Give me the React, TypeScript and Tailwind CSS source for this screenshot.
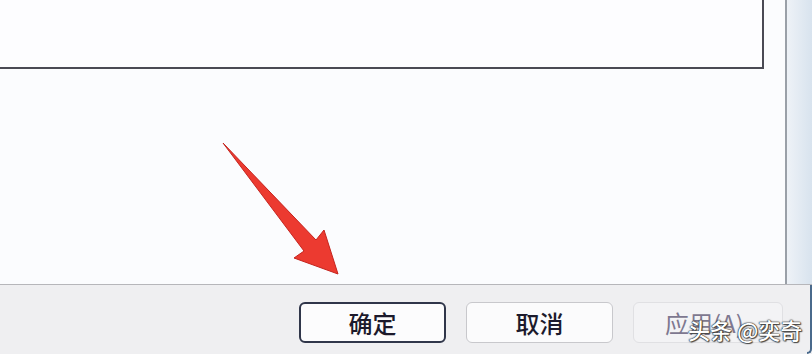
export default function App() {
	return (
		<div className="relative w-[812px] h-[354px] overflow-hidden bg-[#efeff1] font-['Noto_Sans_CJK_SC','Noto_Sans',sans-serif]">
			{/* Top content area */}
			<div className="flex h-[285px] border-b border-[#b6b6ba]">
				<div className="w-[787px] bg-[#fbfcfe] border-r-2 border-[#9aa0a8]">
					<div className="w-[764px] h-[69px] bg-[#fdfdff] border-r-2 border-b-2 border-[#4a4a54]" />
				</div>
				<div className="flex-1 bg-linear-to-r from-[#eef2f7] to-[#d8e3ee]" />
			</div>

			{/* Footer buttons */}
			<div className="flex gap-[20px] pl-[299px] pt-[17px]">
				<button className="w-[147px] h-[41px] rounded-[6px] border-2 border-[#30364a] bg-[#fcfcfd] text-[24px] font-medium leading-none text-[#1c1a2c]">
					确定
				</button>
				<button className="w-[147px] h-[41px] rounded-[6px] border border-[#c8c8cc] bg-[#fbfbfc] text-[24px] font-medium leading-none text-[#1c1a2c]">
					取消
				</button>
				<button className="w-[150px] h-[41px] rounded-[6px] border border-[#e0e0e3] bg-[#f3f3f5] pl-[31px] text-left text-[24px] leading-none text-[#7e7890]">
					应用(A)
				</button>
			</div>

			{/* Right window edge */}
			<div className="absolute right-0 top-[285px] h-[69px] w-[5px] rounded-br-[6px] border-r-2 border-b-2 border-[#4a6a8c]" />

			{/* Red arrow */}
			<svg
				className="absolute left-0 top-0"
				width="812"
				height="354"
				viewBox="0 0 812 354"
			>
				<polygon
					points="223,143 316,240 324,230 338,274 294,258 304,251"
					fill="#ec3a30"
					stroke="#c4241e"
					strokeWidth="1"
					strokeLinejoin="round"
				/>
			</svg>

			{/* Watermark */}
			<div className="absolute left-[688px] top-[318px] text-[22px] font-medium leading-none text-white [text-shadow:0_0_1px_#222,0_0_1px_#222,0_0_2px_#444,1px_1px_1px_#555]">
				头条 @奕奇
			</div>
		</div>
	)
}
